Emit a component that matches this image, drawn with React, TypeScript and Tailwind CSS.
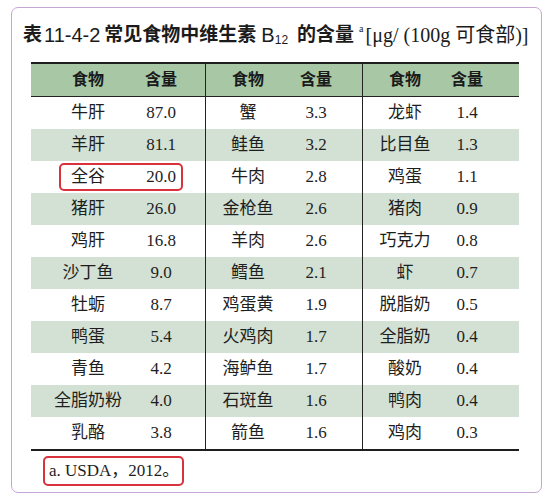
import React from "react";

const g1: [string, string][] = [
  ["牛肝", "87.0"], ["羊肝", "81.1"], ["全谷", "20.0"], ["猪肝", "26.0"], ["鸡肝", "16.8"], ["沙丁鱼", "9.0"],
  ["牡蛎", "8.7"], ["鸭蛋", "5.4"], ["青鱼", "4.2"], ["全脂奶粉", "4.0"], ["乳酪", "3.8"],
];
const g2: [string, string][] = [
  ["蟹", "3.3"], ["鲑鱼", "3.2"], ["牛肉", "2.8"], ["金枪鱼", "2.6"], ["羊肉", "2.6"], ["鳕鱼", "2.1"],
  ["鸡蛋黄", "1.9"], ["火鸡肉", "1.7"], ["海鲈鱼", "1.7"], ["石斑鱼", "1.6"], ["箭鱼", "1.6"],
];
const g3: [string, string][] = [
  ["龙虾", "1.4"], ["比目鱼", "1.3"], ["鸡蛋", "1.1"], ["猪肉", "0.9"], ["巧克力", "0.8"], ["虾", "0.7"],
  ["脱脂奶", "0.5"], ["全脂奶", "0.4"], ["酸奶", "0.4"], ["鸭肉", "0.4"], ["鸡肉", "0.3"],
];

const serif = { fontFamily: '"Liberation Serif", "Noto Sans CJK SC", serif' };
const sans = { fontFamily: '"Liberation Sans", "Noto Sans CJK SC", sans-serif' };

function Header() {
  return (
    <div className="flex h-[33px] items-center border-b border-[#222] bg-[#a7c7a5] text-[16px] font-bold text-[#1a1a1a]" style={sans}>
      <div className="flex h-full w-[175px] items-center border-r border-[#222] pl-[18px]">
        <span className="w-[78px] text-center">食物</span>
        <span className="w-[68px] text-center">含量</span>
      </div>
      <div className="flex h-full w-[157px] items-center border-r border-[#222]">
        <span className="w-[84px] text-center">食物</span>
        <span className="w-[52px] text-center">含量</span>
      </div>
      <div className="flex h-full w-[156px] items-center">
        <span className="w-[84px] text-center">食物</span>
        <span className="w-[40px] text-center">含量</span>
      </div>
    </div>
  );
}

function Row({ i }: { i: number }) {
  const striped = i % 2 === 1;
  return (
    <div className={"relative flex h-[32px] items-center text-[17px] text-[#1e1e1e] " + (striped ? "bg-[#d2e1d4]" : "bg-white")} style={serif}>
      <div className="flex h-full w-[175px] items-center border-r border-[#222] pl-[18px]">
        <span className="w-[78px] text-center">{g1[i][0]}</span>
        <span className="w-[68px] text-center">{g1[i][1]}</span>
      </div>
      <div className="flex h-full w-[157px] items-center border-r border-[#222]">
        <span className="w-[84px] text-center">{g2[i][0]}</span>
        <span className="w-[52px] text-center">{g2[i][1]}</span>
      </div>
      <div className="flex h-full w-[156px] items-center">
        <span className="w-[84px] text-center">{g3[i][0]}</span>
        <span className="w-[40px] text-center">{g3[i][1]}</span>
      </div>
      {i === 2 && (
        <div className="absolute left-[28px] top-[2px] h-[28px] w-[124px] rounded-[5px] border-2 border-[#d8323d]" />
      )}
    </div>
  );
}

export default function App() {
  return (
    <div className="h-[500px] w-[551px] bg-white pl-[11px] pt-[7px]">
      <div className="flex h-[486px] w-[531px] flex-col rounded-[7px] border border-[#c6a6d4] pt-[12px]">
        <div className="flex h-[30px] items-center whitespace-nowrap pl-[11px] text-[19px] text-[#1b1b1b]" style={sans}>
          <span className="font-bold">表</span>
          <span className="ml-[2px] text-[20px]">11-4-2</span>
          <span className="ml-[4px] font-bold">常见食物中维生素</span>
          <span className="ml-[5px] text-[20px]">B</span>
          <span className="relative top-[5px] text-[12px]">12</span>
          <span className="ml-[9px] font-bold">的含量</span>
          <span className="relative -top-[7px] ml-[5px] text-[10px]" style={serif}>a</span>
          <span className="ml-[2px] text-[20px]" style={serif}>[μg/</span>
          <span className="ml-[5px] text-[20px]" style={serif}>(100g 可食部)]</span>
        </div>
        <div className="ml-[19px] mt-[12px] w-[488px] border-b-2 border-t-2 border-[#1e1e1e]">
          <Header />
          {Array.from({ length: 11 }, (_, i) => (
            <Row key={i} i={i} />
          ))}
        </div>
        <div className="ml-[31px] mt-[5px] flex h-[30px] w-[141px] items-center rounded-[5px] border-2 border-[#d8323d] pl-[4px] text-[17px] text-[#1e1e1e]" style={serif}>
          a. USDA，2012。
        </div>
      </div>
    </div>
  );
}
